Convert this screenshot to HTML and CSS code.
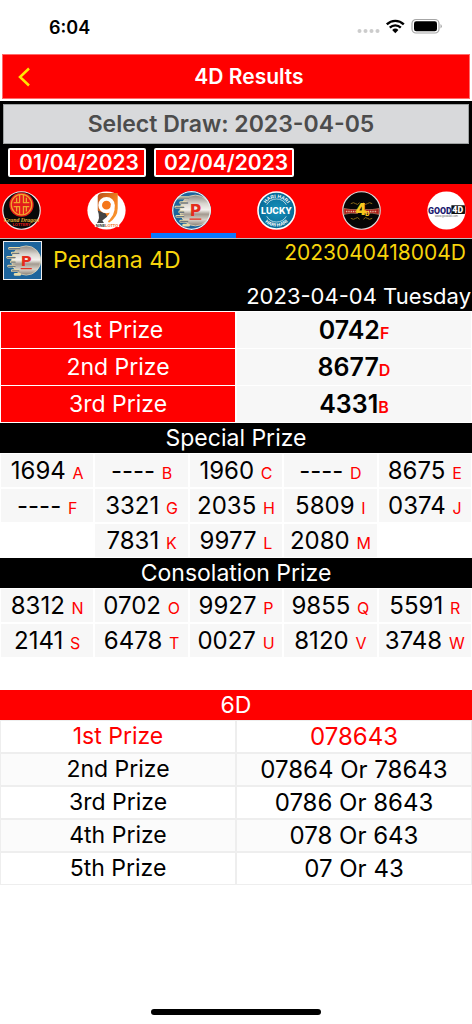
FILE: index.html
```html
<!DOCTYPE html>
<html lang="en">
<head>
<meta charset="utf-8">
<meta name="viewport" content="width=device-width, initial-scale=1">
<title>4D Results</title>
<link rel="stylesheet" href="styles.css">
</head>
<body>
<svg class="defs" width="0" height="0" aria-hidden="true">
  <defs>
    <linearGradient id="metal" x1="0" y1="0" x2="0" y2="1">
      <stop offset="0" stop-color="#8d8780"/><stop offset=".28" stop-color="#d9d5cf"/><stop offset=".48" stop-color="#f4f2ee"/><stop offset=".62" stop-color="#a39a90"/><stop offset=".8" stop-color="#d8d2c9"/><stop offset="1" stop-color="#857d74"/>
    </linearGradient>
    <linearGradient id="orange" x1="0" y1="0" x2="1" y2="1">
      <stop offset="0" stop-color="#b8501c"/><stop offset=".6" stop-color="#f58220"/><stop offset="1" stop-color="#f9a13a"/>
    </linearGradient>
    <radialGradient id="teal"><stop offset="0" stop-color="#1593bd"/><stop offset="1" stop-color="#086a96"/></radialGradient>
    <symbol id="perdana" viewBox="0 0 40 40">
      <rect width="40" height="40" fill="#1d649c"/>
      <circle cx="24" cy="20" r="15.800" fill="url(#metal)" stroke="#e8dfc0" stroke-width=".8"/>
      <path d="M6 7h10M9 12h5M4 16.500h7M8 21.500h3M5 26h6M9 31h6M12 35h5" stroke="#e8dca8" stroke-width="3" stroke-linecap="round"/>
      <path d="M6 7.300h11M9 12.300h7M4 16.800h8M8 21.800h4M5 26.300h7M9 31.300h7" stroke="#6d7682" stroke-width="1.400" stroke-linecap="round"/>
      <text x="24" y="25.500" text-anchor="middle" class="logo-p">P</text>
      <path d="M18 28.800h12" stroke="#e52b1c" stroke-width="1.300"/>
    </symbol>
  </defs>
</svg>

<div class="status">
  <span class="time">6:04</span>
  <svg class="status-icons" width="86" height="18" viewBox="0 0 86 18" aria-hidden="true">
    <g fill="#ccc"><circle cx="3.500" cy="13" r="2"/><circle cx="9.500" cy="13" r="2"/><circle cx="15.500" cy="13" r="2"/><circle cx="21.500" cy="13" r="2"/></g>
    <g fill="none" stroke="#000" stroke-width="2.400"><path d="M30.800 6.300a12.200 12.200 0 0 1 17 0"/><path d="M33.800 9.600a8 8 0 0 1 11 0"/></g>
    <path d="M36.200 12a4.600 4.600 0 0 1 6.200 0l-3.100 3.300z"/>
    <rect x="56" y="1.500" width="27" height="13.500" rx="4" fill="#fff" stroke="#a6a6a6" stroke-width="1.200"/>
    <rect x="58" y="3.300" width="23" height="10" rx="2.300"/>
    <path d="M84.500 6v4.500q1.300-.7 1.300-2.200t-1.300-2.300z" fill="#a6a6a6"/>
  </svg>
</div>

<header class="titlebar">
  <button class="back" type="button" aria-label="Back"><svg width="14" height="20" viewBox="0 0 14 20"><path d="M12 1.500 3 10l9 8.500" fill="none" stroke="#ffe600" stroke-width="2.500"/></svg></button>
  <h1 class="title">4D Results</h1>
</header>

<section class="draws">
  <button class="select-draw" type="button">Select Draw: 2023-04-05</button>
  <div class="dates">
    <button class="date" type="button">01/04/2023</button>
    <button class="date" type="button">02/04/2023</button>
  </div>
</section>

<nav class="tabs">
  <button class="tab" type="button" aria-label="Grand Dragon">
    <svg class="logo" viewBox="0 0 40 40"><circle cx="20" cy="20" r="19.200" fill="#080808" stroke="#eee" stroke-width="1.200"/>
      <circle cx="20" cy="14" r="12.500" fill="#e31b1b"/>
      <g fill="none" stroke="#f0a62c" stroke-width="1.300"><circle cx="20" cy="14" r="10.500"/><path d="M18 4v8h-6M22 4v8h6M18 24v-8h-6M22 24v-8h6M15 7v5M25 7v5M15 16v5M25 16v5"/></g>
      <text x="20" y="32" text-anchor="middle" class="logo-dragon">Grand Dragon</text>
      <text x="20" y="36" text-anchor="middle" class="logo-lottery">LOTTERY</text></svg>
  </button>
  <button class="tab" type="button" aria-label="Nine Lotto">
    <svg class="logo" viewBox="0 0 40 40"><circle cx="20" cy="20" r="19.600" fill="#fff"/>
      <path d="M11 5q1-3 5-3h15.500v16q0 9-9 14.500L18 25l-7-5z" fill="url(#orange)"/>
      <path d="M11 20l8 3 2 4-4 6h-7q4-5 1-13z" fill="#444"/>
      <circle cx="20" cy="14.500" r="6.500" fill="#f5761a" stroke="#fff" stroke-width="3.800"/><path d="M26.300 14q1.500 11-9.500 18" fill="none" stroke="#fff" stroke-width="4"/>
      <rect x="8" y="33" width="25" height="4" fill="#fff"/>
      <text x="20.500" y="37" text-anchor="middle" class="logo-nine">NINE<tspan fill="#f26b21">LOTTO</tspan></text></svg>
  </button>
  <button class="tab active" type="button" aria-label="Perdana 4D" aria-current="true">
    <svg class="logo round" viewBox="0 0 40 40"><use href="#perdana" width="40" height="40"/><circle cx="20" cy="20" r="19.300" fill="none" stroke="#eee" stroke-width="1.300"/></svg>
  </button>
  <button class="tab" type="button" aria-label="Lucky Hari Hari">
    <svg class="logo" viewBox="0 0 40 40"><circle cx="20" cy="20" r="19" fill="url(#teal)" stroke="#fff" stroke-width="1.600"/>
      <path id="arc-top" d="M7 20a13 13 0 0 1 26 0" fill="none"/><path id="arc-bottom" d="M3.500 20a16.500 16.500 0 0 0 33 0" fill="none"/>
      <path d="M10 14a11.500 11.500 0 0 1 20 0M10 26a11.500 11.500 0 0 0 20 0" fill="none" stroke="#fff" stroke-width=".7"/>
      <text class="logo-hari" text-anchor="middle"><textPath href="#arc-top" startOffset="50%">HARI HARI</textPath></text>
      <text class="logo-hari" text-anchor="middle"><textPath href="#arc-bottom" startOffset="50%">HARI HARI</textPath></text>
      <text x="20" y="23.500" text-anchor="middle" class="logo-lucky">LUCKY</text></svg>
  </button>
  <button class="tab" type="button" aria-label="4D">
    <svg class="logo" viewBox="0 0 40 40"><circle cx="20" cy="20" r="19.200" fill="#050505" stroke="#ddd" stroke-width="1.200"/>
      <path d="M2 18q7 1.500 14 1v4q-7-1-14 1zM38 18q-7 1.500-14 1v4q7-1 14 1z" fill="#a81813" stroke="#d99b7a" stroke-width=".6"/>
      <path d="M4 21h11M25 21h11" stroke="#f0cbb0" stroke-width="1.500" stroke-dasharray="1 .8"/>
      <path d="M9 13q3-2 5 0t4-1M31 13q-3-2-5 0t-4-1M9 28q3 2 5 0t4 1M31 28q-3 2-5 0t-4 1" fill="none" stroke="#8c6b18" stroke-width="1"/>
      <text x="19.500" y="25" text-anchor="middle" class="logo-four">4</text><text x="26" y="26" text-anchor="middle" class="logo-d">D</text></svg>
  </button>
  <button class="tab" type="button" aria-label="Good 4D">
    <svg class="logo" viewBox="0 0 40 40"><circle cx="20" cy="20" r="19.600" fill="#fff"/>
      <path d="M25 14.500h13.800q.9 5 0 9h-13.800z" fill="#111"/>
      <text x="1" y="23.500" class="logo-good">GOOD</text><text x="26" y="22.500" class="logo-good4">4D</text>
      <text x="20" y="27" text-anchor="middle" class="logo-url">www.good4d.com</text></svg>
  </button>
</nav>

<main>
  <section class="operator">
    <svg class="operator-logo" viewBox="0 0 40 40" aria-hidden="true"><use href="#perdana" width="40" height="40"/></svg>
    <h2 class="operator-name">Perdana 4D</h2>
    <span class="draw-no">2023040418004D</span>
    <span class="draw-date">2023-04-04 Tuesday</span>
  </section>

  <table class="top-prizes">
    <tbody>
      <tr><th scope="row">1st Prize</th><td>0742<span class="mark">F</span></td></tr>
      <tr><th scope="row">2nd Prize</th><td>8677<span class="mark">D</span></td></tr>
      <tr><th scope="row">3rd Prize</th><td>4331<span class="mark">B</span></td></tr>
    </tbody>
  </table>

  <table class="numbers">
    <caption>Special Prize</caption>
    <tbody>
      <tr><td>1694 <span class="mark">A</span></td><td>---- <span class="mark">B</span></td><td>1960 <span class="mark">C</span></td><td>---- <span class="mark">D</span></td><td>8675 <span class="mark">E</span></td></tr>
      <tr><td>---- <span class="mark">F</span></td><td>3321 <span class="mark">G</span></td><td>2035 <span class="mark">H</span></td><td>5809 <span class="mark">I</span></td><td>0374 <span class="mark">J</span></td></tr>
      <tr><td class="empty"></td><td>7831 <span class="mark">K</span></td><td>9977 <span class="mark">L</span></td><td>2080 <span class="mark">M</span></td><td class="empty"></td></tr>
    </tbody>
  </table>

  <table class="numbers">
    <caption>Consolation Prize</caption>
    <tbody>
      <tr><td>8312 <span class="mark">N</span></td><td>0702 <span class="mark">O</span></td><td>9927 <span class="mark">P</span></td><td>9855 <span class="mark">Q</span></td><td>5591 <span class="mark">R</span></td></tr>
      <tr><td>2141 <span class="mark">S</span></td><td>6478 <span class="mark">T</span></td><td>0027 <span class="mark">U</span></td><td>8120 <span class="mark">V</span></td><td>3748 <span class="mark">W</span></td></tr>
    </tbody>
  </table>

  <table class="six-d">
    <caption>6D</caption>
    <tbody>
      <tr class="first"><th scope="row">1st Prize</th><td>078643</td></tr>
      <tr><th scope="row">2nd Prize</th><td>07864 Or 78643</td></tr>
      <tr><th scope="row">3rd Prize</th><td>0786 Or 8643</td></tr>
      <tr><th scope="row">4th Prize</th><td>078 Or 643</td></tr>
      <tr><th scope="row">5th Prize</th><td>07 Or 43</td></tr>
    </tbody>
  </table>
</main>

<div class="home-indicator"></div>
</body>
</html>
```
FILE: styles.css
```css
* { box-sizing: border-box; }

body {
  margin: 0;
  min-height: 100vh;
  display: flex;
  flex-direction: column;
  background: #fff;
  color: #000;
  font-family: Inter, "Liberation Sans", sans-serif;
  font-size: 24px;
  overflow-x: hidden;
}

h1, h2 { margin: 0; }
button { font: inherit; cursor: pointer; }
.defs { position: absolute; }

.status {
  height: 54px;
  padding: 0 30px 0 49px;
  display: flex;
  align-items: center;
  justify-content: space-between;
}
.time { font-size: 18px; font-weight: 600; }

.titlebar {
  margin: 0 2px 2px;
  height: 45px;
  display: grid;
  grid-template-columns: 44px 1fr 18px;
  align-items: center;
  background: #f00;
  border: 1px solid #ff6b6b;
}
.back {
  padding: 0 0 0 14px;
  border: 0;
  background: none;
  line-height: 0;
  text-align: left;
}
.title {
  color: #fff;
  font-size: 21px;
  font-weight: 600;
  text-align: center;
}

.draws {
  padding: 3px 3px 7px;
  background: #000;
}
.select-draw {
  display: block;
  width: 100%;
  height: 40px;
  padding: 0 10px 0 0;
  border: 1px solid #9fa3a3;
  background: #d8d9db;
  color: #4c4c4c;
  font-size: 23px;
  font-weight: 600;
}
.dates {
  display: flex;
  gap: 8px;
  padding: 4px 5px 0;
}
.date {
  height: 29px;
  padding: 0 4px 0 8px;
  border: 2px solid #fff;
  border-radius: 2px;
  background: #f00;
  color: #fff;
  font-size: 21px;
  font-weight: 600;
  line-height: 25px;
  flex: 0 0 138px;
  white-space: nowrap;
}

.tabs {
  display: grid;
  grid-template-columns: repeat(6, 1fr);
  margin: 0 -4%;
  background: #f00;
  border-bottom: 1px solid #bbb;
}
.tab {
  height: 54px;
  padding: 7px 4px 3px 0;
  border: 0;
  border-bottom: 5px solid transparent;
  background: none;
}
.tab.active { border-bottom-color: #0a7aff; }
.logo { display: block; width: 39px; height: 39px; margin: 0 auto; }
.round { border-radius: 50%; }

.logo-p { font: 900 16px "DejaVu Sans", sans-serif; fill: #e52b1c; }
.logo-dragon { font: italic 700 6px "Liberation Serif", serif; fill: #e0b43c; }
.logo-lottery { font: 700 4px "Liberation Sans", sans-serif; fill: #e31b1b; }
.logo-nine { font: 700 4px "Liberation Sans", sans-serif; fill: #333; }
.logo-hari { font: 700 5px "Liberation Sans", sans-serif; fill: #fff; }
.logo-lucky { font: 800 9px Inter, sans-serif; fill: #fff; }
.logo-four { font: 900 16px Inter, sans-serif; fill: #f7c81e; }
.logo-d { font: 900 6px Inter, sans-serif; fill: #f7c81e; }
.logo-good { font: 900 9px Roboto, sans-serif; fill: #191970; }
.logo-good4 { font: 900 9px Roboto, sans-serif; fill: #fff; }
.logo-url { font: 3px "Liberation Sans", sans-serif; fill: #666; }

.operator {
  display: grid;
  grid-template-columns: 50px 1fr auto;
  grid-template-rows: 42px 30px;
  padding: 0 1px 0 3px;
  background: #000;
}
.operator-logo {
  width: 39px;
  height: 39px;
  margin-top: 2px;
  border: 1px solid #eee;
}
.operator-name {
  color: #f7d40b;
  font-size: 23px;
  font-weight: 400;
  line-height: 43px;
}
.draw-no {
  padding-right: 5px;
  color: #f7d40b;
  font-size: 21px;
  line-height: 28px;
}
.draw-date {
  grid-column: 1 / -1;
  color: #fff;
  font-size: 22px;
  line-height: 30px;
  text-align: right;
}

table {
  width: 100%;
  table-layout: fixed;
  border-spacing: 0;
  text-align: center;
}
th, td { padding: 0; font-weight: 400; }
th, caption { font-size: 23px; }
.mark { color: #f00; font-size: 16px; line-height: 1; }

.top-prizes { border-bottom: 1px solid #fff; }
.top-prizes th, .top-prizes td {
  height: 37px;
  border: solid #fff;
  border-width: 1px 1px 0;
  line-height: 36px;
}
.top-prizes th { background: #f00; color: #fff; }
.top-prizes td { background: #f7f7f7; font-size: 25px; font-weight: 600; }

caption {
  height: 30px;
  background: #000;
  color: #fff;
  line-height: 30px;
}
.numbers td {
  height: 35px;
  border: 1px solid #fff;
  background: #f7f7f7;
  line-height: 33px;
}
.numbers .empty { background: none; }

.six-d { margin-top: 32px; }
.six-d caption { background: #f00; }
.six-d th, .six-d td {
  height: 33px;
  border: 1px solid #eee;
  line-height: 31px;
}
.six-d tr:nth-child(even) { background: #fbfbfb; }
.six-d .first { color: #f00; }

.home-indicator {
  width: 36%;
  height: 6px;
  margin: auto auto 9px;
  border-radius: 3px;
  background: #000;
}
```
